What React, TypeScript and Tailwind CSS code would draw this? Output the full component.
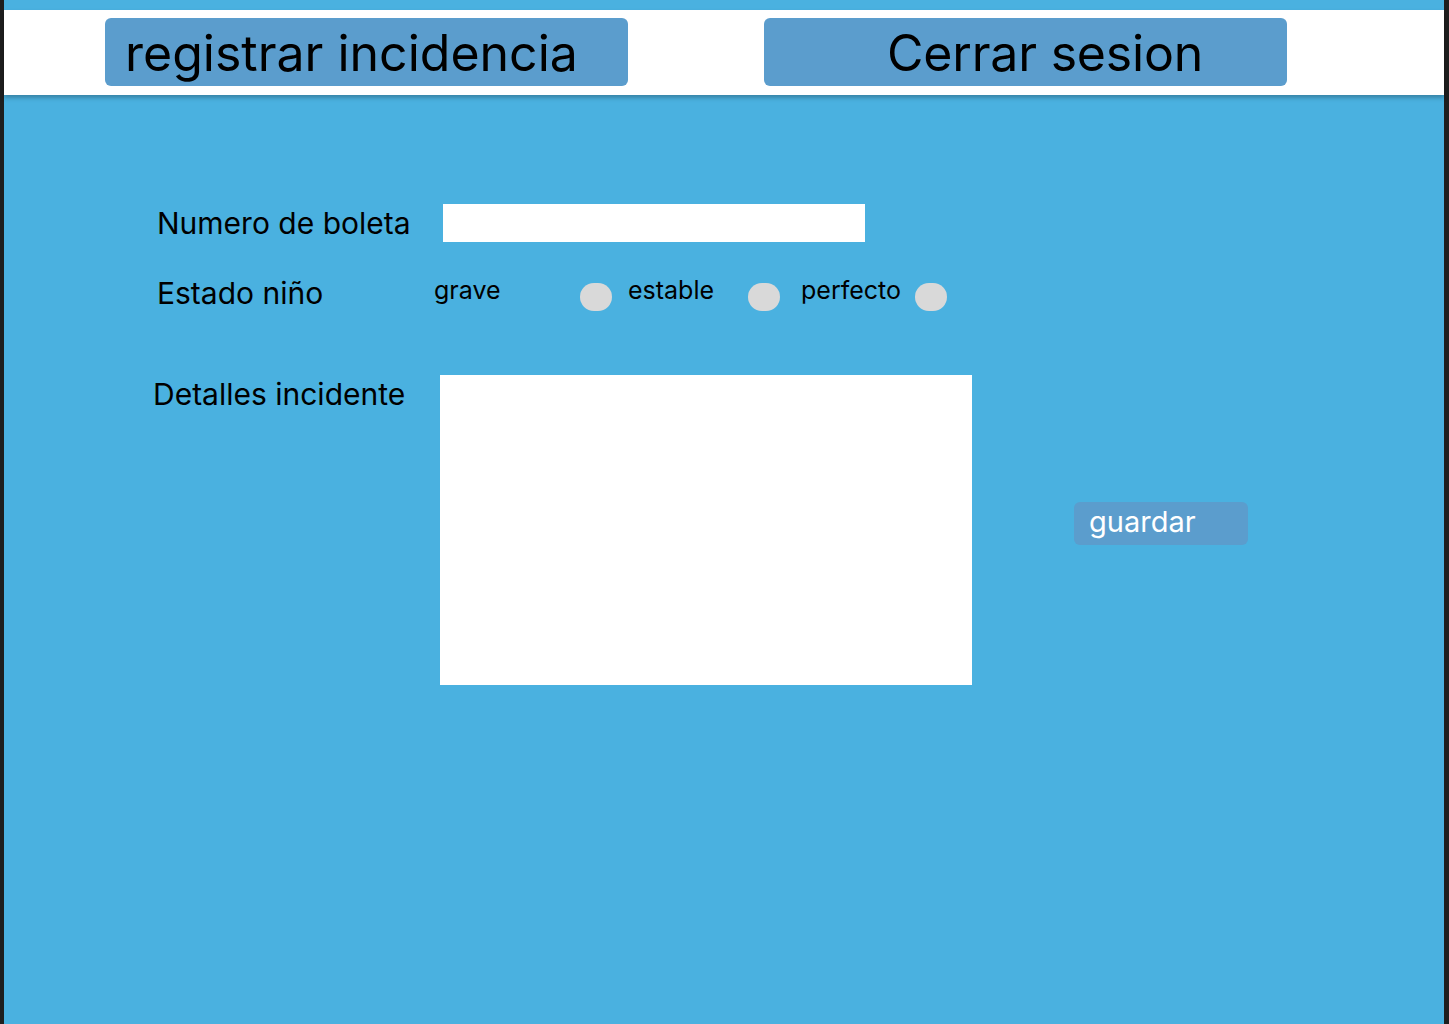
export default function App() {
  return (
    <div className="w-full h-[1024px] bg-[#1e1e1e] pl-[4px] pr-[5px] font-['Inter',sans-serif] text-black overflow-hidden">
      <main className="h-full bg-[#4ab1e0] pt-[10px]">
        {/* header */}
        <header className="relative h-[85px] bg-white shadow-[0_3px_4px_rgba(0,0,0,0.25)] pl-[101px] pt-[8px] flex items-start">
          <button className="w-[523px] h-[68px] rounded-md bg-[#5b9dcd] text-left pl-[20px] text-[50px] leading-none pt-[2px]">
            registrar incidencia
          </button>
          <button className="ml-[136px] w-[523px] h-[68px] rounded-md bg-[#5b9dcd] text-left pl-[123px] text-[50px] leading-none pt-[2px] tracking-[-0.2px]">
            Cerrar sesion
          </button>
        </header>

        {/* form */}
        <section className="pl-[153px] pt-[109px]">
          <div className="flex items-center h-[38px]">
            <span className="w-[286px] text-[30px] leading-none">Numero de boleta</span>
            <div className="w-[422px] h-[38px] bg-white" />
          </div>

          <div className="flex items-center h-[40px] mt-[31px]">
            <span className="w-[277px] text-[30px] leading-none">Estado niño</span>
            <span className="w-[146px] text-[25px] leading-none -mt-[6px]">grave</span>
            <span className="w-[32px] h-[28px] rounded-full bg-[#d9d9d9] mt-[8px]" />
            <span className="ml-[16px] w-[120px] text-[25px] leading-none -mt-[6px]">estable</span>
            <span className="w-[32px] h-[28px] rounded-full bg-[#d9d9d9] mt-[8px]" />
            <span className="ml-[21px] w-[114px] text-[25px] leading-none -mt-[6px]">perfecto</span>
            <span className="w-[32px] h-[28px] rounded-full bg-[#d9d9d9] mt-[8px]" />
          </div>

          <div className="flex items-start mt-[62px]">
            <span className="-ml-[4px] w-[287px] text-[30px] leading-none pt-[4px]">Detalles incidente</span>
            <div className="w-[532px] h-[310px] bg-white" />
            <button className="ml-[102px] mt-[127px] w-[174px] h-[43px] rounded-md bg-[#5b9dcd] text-white text-left pl-[15px] text-[29px] leading-none pb-[4px]">
              guardar
            </button>
          </div>
        </section>
      </main>
    </div>
  );
}
